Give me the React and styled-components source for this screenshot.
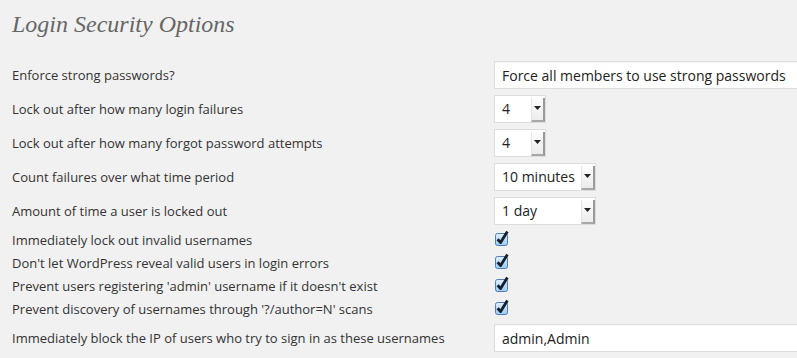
import React from 'react'
import styled, { createGlobalStyle } from 'styled-components'

const GlobalStyle = createGlobalStyle`
  html, body {
    margin: 0;
    padding: 0;
    background: #f1f1f1;
    overflow: hidden;
  }
  body {
    font-family: 'Open Sans', 'Liberation Sans', sans-serif;
    color: #333;
  }
`

const rows = [
  { label: 'Enforce strong passwords?', type: 'text', value: 'Force all members to use strong passwords' },
  { label: 'Lock out after how many login failures', type: 'select', value: '4', width: 52 },
  { label: 'Lock out after how many forgot password attempts', type: 'select', value: '4', width: 52 },
  { label: 'Count failures over what time period', type: 'select', value: '10 minutes', width: 102 },
  { label: 'Amount of time a user is locked out', type: 'select', value: '1 day', width: 102 },
  { label: 'Immediately lock out invalid usernames', type: 'check' },
  { label: "Don't let WordPress reveal valid users in login errors", type: 'check' },
  { label: "Prevent users registering 'admin' username if it doesn't exist", type: 'check' },
  { label: "Prevent discovery of usernames through '?/author=N' scans", type: 'check' },
  { label: 'Immediately block the IP of users who try to sign in as these usernames', type: 'text', value: 'admin,Admin', last: true },
]

class App extends React.Component {
  renderField(row) {
    if (row.type === 'text') {
      return <TextInput defaultValue={row.value} />
    }
    if (row.type === 'select') {
      return (
        <SelectBox $w={row.width}>
          <SelectValue>{row.value}</SelectValue>
          <SelectArrow>
            <svg width="7" height="4" viewBox="0 0 7 4">
              <path d="M0 0h7L3.5 4z" fill="#222" />
            </svg>
          </SelectArrow>
        </SelectBox>
      )
    }
    return (
      <Check>
        <svg width="16" height="17" viewBox="0 0 16 17">
          <defs>
            <linearGradient id="cbg" x1="0" y1="0" x2="0" y2="1">
              <stop offset="0" stopColor="#e2f0fd" />
              <stop offset="1" stopColor="#9ccaf4" />
            </linearGradient>
          </defs>
          <rect x="1.5" y="3.5" width="12" height="12" rx="2" fill="url(#cbg)" stroke="#4d7fb5" />
          <path d="M3.6 9.2l3 3.4L13.4 1.6" fill="none" stroke="#16202c" strokeWidth="2.8" strokeLinejoin="round" />
        </svg>
      </Check>
    )
  }

  render() {
    return (
      <Page>
        <GlobalStyle />
        <Title>Login Security Options</Title>
        <Form>
          {rows.map((row, i) => (
            <Row key={i} $compact={row.type === 'check'} $last={row.last}>
              <Label>{row.label}</Label>
              <Field>{this.renderField(row)}</Field>
            </Row>
          ))}
        </Form>
      </Page>
    )
  }
}

export default App

const Page = styled.div`
  padding: 0 0 0 12px;
`

const Title = styled.h2`
  margin: 0;
  height: 58px;
  padding-top: 10px;
  box-sizing: border-box;
  font-family: 'Liberation Serif', Georgia, serif;
  font-style: italic;
  font-weight: normal;
  font-size: 24px;
  line-height: 28px;
  color: #666;
`

const Form = styled.div`
  display: flex;
  flex-direction: column;
`

const Row = styled.div`
  display: grid;
  grid-template-columns: 482px 1fr;
  align-items: center;
  height: ${p => (p.$compact ? '23px' : '28px')};
  padding: ${p => (p.$compact ? '0' : p.$last ? '4px 0' : '3px 0')};
`

const Label = styled.div`
  font-size: 13px;
  color: #333;
  white-space: nowrap;
`

const Field = styled.div`
  display: flex;
  align-items: center;
  height: 100%;
  min-width: 0;
  overflow: hidden;
`

const TextInput = styled.input`
  box-sizing: border-box;
  flex: none;
  width: 330px;
  height: 28px;
  margin: 0;
  padding: 0 7px;
  border: 1px solid #ddd;
  background: #fff;
  font-family: 'Open Sans', 'Liberation Sans', sans-serif;
  font-size: 14px;
  color: #222;
  outline: none;
  box-shadow: inset 0 1px 1px rgba(0, 0, 0, 0.04);
`

const SelectBox = styled.div`
  box-sizing: border-box;
  width: ${p => p.$w}px;
  height: 28px;
  display: flex;
  border: 1px solid #ddd;
  background: #fff;
`

const SelectValue = styled.div`
  flex: 1;
  padding-left: 7px;
  font-size: 14px;
  line-height: 26px;
  color: #222;
  white-space: nowrap;
`

const SelectArrow = styled.div`
  box-sizing: border-box;
  width: 14px;
  margin: 2px 0 0;
  display: flex;
  align-items: center;
  justify-content: center;
  background: linear-gradient(#fdfdfd, #ececec);
  border-left: 1px solid #e4e4e4;
  border-right: 2px solid #9a9a9a;
  border-bottom: 2px solid #a8a8a8;
  svg {
    margin-top: -2px;
  }
`

const Check = styled.div`
  display: flex;
  margin-top: -3px;
`
